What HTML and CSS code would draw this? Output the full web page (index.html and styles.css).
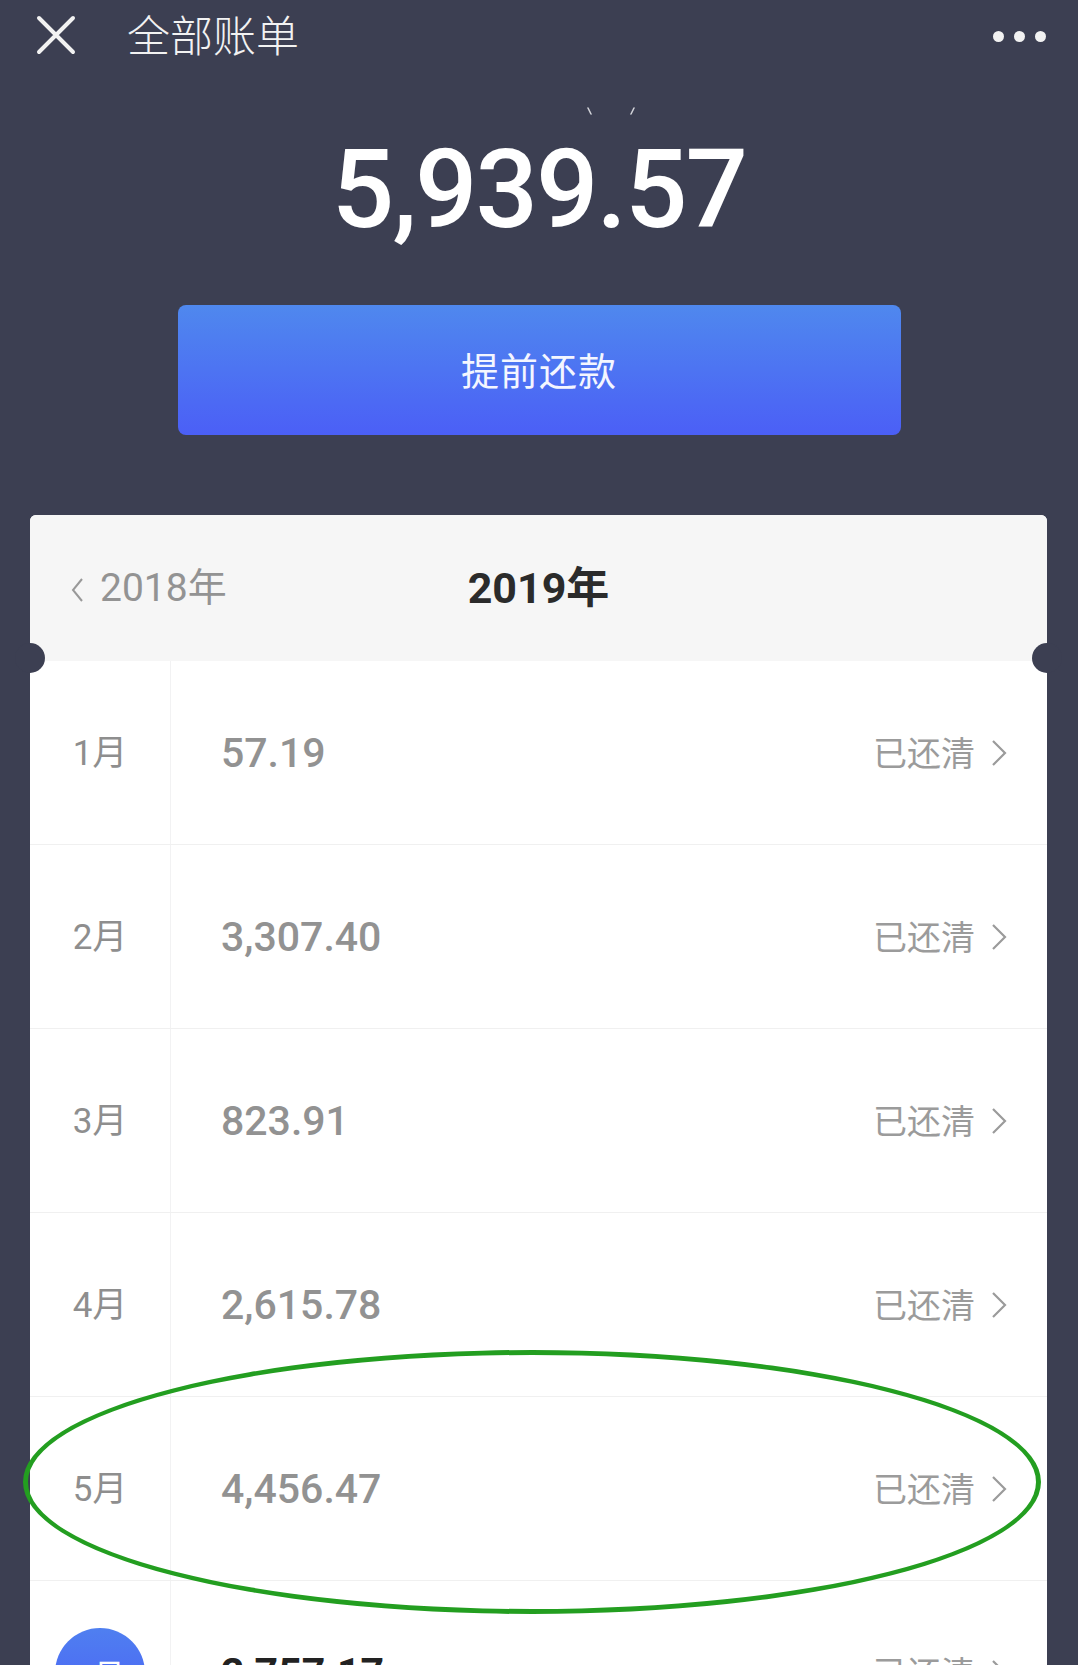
FILE: index.html
```html
<!DOCTYPE html>
<html lang="zh-CN">
<head>
    <meta charset="UTF-8">
    <meta name="viewport" content="width=device-width, initial-scale=1.0">
    <title>全部账单</title>
    <link rel="stylesheet" href="styles.css">
</head>
<body>
    <div class="topbar">
        <svg class="close" viewBox="0 0 40 40" width="40" height="40">
            <path d="M3 3 L37 37 M37 3 L3 37" stroke="#f2f2f2" stroke-width="4" stroke-linecap="round"/>
        </svg>
        <h1 class="title">全部账单</h1>
        <div class="more">
            <span></span><span></span><span></span>
        </div>
    </div>

    <div class="summary">
        <svg class="eye" viewBox="0 0 60 14" width="60" height="14">
            <path d="M7 3 L10 9 M53 3 L50 9" stroke="#cfd0d6" stroke-width="1.6" stroke-linecap="round"/>
        </svg>
        <div class="total">5,939.57</div>
        <button class="repay">提前还款</button>
    </div>

    <div class="card">
        <div class="card-head">
            <div class="prev-year">
                <svg viewBox="0 0 14 26" width="14" height="26">
                    <path d="M12 2 L3 13 L12 24" fill="none" stroke="#999" stroke-width="2"/>
                </svg>
                <span>2018年</span>
            </div>
            <div class="cur-year">2019年</div>
            <div></div>
        </div>

        <!-- 월별 목록 -->
        <div class="row">
            <div class="month">1月</div>
            <div class="amount">57.19</div>
            <div class="status">已还清 <svg class="arrow" viewBox="0 0 16 28"><path d="M2 2 L14 14 L2 26"/></svg></div>
        </div>
        <div class="row">
            <div class="month">2月</div>
            <div class="amount">3,307.40</div>
            <div class="status">已还清 <svg class="arrow" viewBox="0 0 16 28"><path d="M2 2 L14 14 L2 26"/></svg></div>
        </div>
        <div class="row">
            <div class="month">3月</div>
            <div class="amount">823.91</div>
            <div class="status">已还清 <svg class="arrow" viewBox="0 0 16 28"><path d="M2 2 L14 14 L2 26"/></svg></div>
        </div>
        <div class="row">
            <div class="month">4月</div>
            <div class="amount">2,615.78</div>
            <div class="status">已还清 <svg class="arrow" viewBox="0 0 16 28"><path d="M2 2 L14 14 L2 26"/></svg></div>
        </div>
        <div class="row marked">
            <div class="month">5月</div>
            <div class="amount">4,456.47</div>
            <div class="status">已还清 <svg class="arrow" viewBox="0 0 16 28"><path d="M2 2 L14 14 L2 26"/></svg></div>
            <div class="ring"></div>
        </div>
        <div class="row current">
            <div class="month"><span class="badge">6月</span></div>
            <div class="amount">2,757.17</div>
            <div class="status">已还清 <svg class="arrow" viewBox="0 0 16 28"><path d="M2 2 L14 14 L2 26"/></svg></div>
        </div>
    </div>
</body>
</html>
```

FILE: styles.css
```css
* {
    margin: 0;
    padding: 0;
    box-sizing: border-box;
}

html, body {
    width: 100%;
    height: 1665px;
    overflow: hidden;
}

body {
    background-color: #3c3f52;
    font-family: Roboto, "Noto Sans CJK SC", sans-serif;
    color: #333;
}

.topbar {
    height: 72px;
    display: flex;
    align-items: center;
    padding: 0 32px 0 36px;
}

.close {
    flex-shrink: 0;
    margin-top: -2px;
}

.title {
    margin-left: 51px;
    font-size: 43px;
    font-weight: 300;
    color: #f2f2f2;
    line-height: 1;
    flex: 1;
    padding-top: 2px;
}

.more {
    display: flex;
    gap: 10px;
}

.more span {
    width: 11px;
    height: 11px;
    border-radius: 50%;
    background-color: #f2f2f2;
}

.summary {
    display: flex;
    flex-direction: column;
    align-items: center;
    padding-top: 33px;
}

.eye {
    display: block;
    margin-left: 144px;
}

.total {
    margin-top: 17px;
    height: 108px;
    font-size: 110px;
    line-height: 108px;
    font-weight: 500;
    color: #fff;
    letter-spacing: -2px;
}

.repay {
    margin-top: 61px;
    width: 723px;
    height: 130px;
    border: none;
    border-radius: 8px;
    background: linear-gradient(180deg, #4f88ee 0%, #4b5ff6 100%);
    color: #f4f6ff;
    font-family: "Noto Sans CJK SC", sans-serif;
    font-size: 38px;
    font-weight: 400;
    letter-spacing: 1px;
    padding-bottom: 4px;
}

.card {
    margin: 80px 31px 0 30px;
    background-color: #fff;
    border-radius: 6px 6px 0 0;
}

.card-head {
    position: relative;
    height: 146px;
    background-color: #f6f6f6;
    border-radius: 6px 6px 0 0;
    display: grid;
    grid-template-columns: 1fr auto 1fr;
    align-items: center;
    padding: 0 40px;
}

/* 티켓 모양 홈 */
.card-head::before,
.card-head::after {
    content: "";
    position: absolute;
    top: 128px;
    width: 30px;
    height: 30px;
    border-radius: 50%;
    background-color: #3c3f52;
}

.card-head::before {
    left: -15px;
}

.card-head::after {
    right: -15px;
}

.prev-year {
    display: flex;
    align-items: center;
    gap: 16px;
    color: #939393;
    font-size: 39px;
    line-height: 1;
}

.prev-year svg {
    margin-top: 4px;
}

.cur-year {
    font-size: 43px;
    font-weight: 700;
    color: #2b2b2b;
    line-height: 1;
}

.row {
    position: relative;
    height: 184px;
    display: flex;
    align-items: center;
    border-bottom: 1px solid #f0f0f0;
}

.month {
    width: 141px;
    height: 100%;
    display: flex;
    align-items: center;
    justify-content: center;
    border-right: 1px solid #f2f2f3;
    font-size: 35px;
    color: #8e8e8e;
    padding-bottom: 6px;
}

.amount {
    flex: 1;
    padding-left: 50px;
    font-size: 41px;
    font-weight: 500;
    color: #929292;
}

.status {
    display: flex;
    align-items: center;
    gap: 16px;
    padding-right: 40px;
    padding-bottom: 2px;
    font-size: 34px;
    color: #9b9b9b;
}

.arrow {
    width: 16px;
    height: 28px;
    fill: none;
    stroke: #9b9b9b;
    stroke-width: 2.2;
    margin-top: 3px;
}

.current .amount {
    color: #222;
    font-weight: 700;
}

.current .month {
    padding-bottom: 0;
}

.badge {
    width: 90px;
    height: 90px;
    border-radius: 50%;
    background: linear-gradient(180deg, #4f7ff0 0%, #4b5ff6 100%);
    color: #fff;
    font-size: 32px;
    display: flex;
    align-items: center;
    justify-content: center;
}

/* 강조 표시 타원 */
.ring {
    position: absolute;
    left: -7px;
    top: -47px;
    width: 1018px;
    height: 264px;
    border: 5px solid #239e20;
    border-radius: 50%;
    pointer-events: none;
}
```
